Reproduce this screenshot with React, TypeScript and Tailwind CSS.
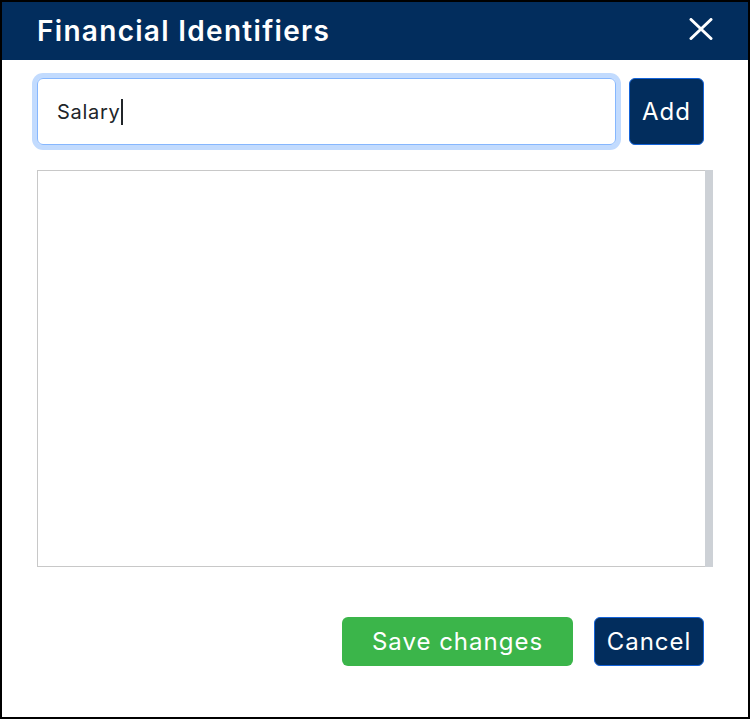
const navy = 'bg-[#022d5d]';

export default function App() {
  return (
    <div className="w-[750px] h-[719px] border-2 border-black bg-white flex flex-col font-['Inter','Liberation_Sans',sans-serif]">
      <div className={`${navy} h-[58px] flex items-center justify-between pl-[35px] pr-[35px]`}>
        <h1 className="text-white text-[28px] font-semibold tracking-[1.3px]">Financial Identifiers</h1>
        <svg width="24" height="22" viewBox="0 0 24 22" className="-mt-[5px]">
          <path d="M2 1.5 L22 20.5 M22 1.5 L2 20.5" stroke="white" strokeWidth="3" strokeLinecap="round" fill="none" />
        </svg>
      </div>

      <div className="flex pl-[35px] mt-[18px]">
        <div className="w-[579px] h-[67px] rounded-[6px] border border-[#86b7fe] ring-[5px] ring-[#c2dbfe] flex items-center pl-[19px]">
          <span className="text-[20px] tracking-[0.7px] text-[#212529]">Salary</span>
          <span className="w-[2px] h-[26px] bg-[#212529] ml-[1px]" />
        </div>
        <button className={`${navy} ml-[13px] w-[75px] h-[67px] rounded-[6px] border border-[#1463d8] text-white text-[24px] tracking-[1px]`}>
          Add
        </button>
      </div>

      <div className="ml-[35px] mt-[25px] w-[676px] h-[397px] border border-[#c8c8c8] flex justify-end">
        <div className="w-[8px] -my-px -mr-px bg-[#cdd1d6]" />
      </div>

      <div className="flex justify-end gap-[21px] pr-[44px] mt-[50px]">
        <button className="w-[231px] h-[49px] rounded-[6px] bg-[#3bb54a] text-white text-[24px] tracking-[1px]">
          Save changes
        </button>
        <button className={`${navy} w-[110px] h-[49px] rounded-[6px] border border-[#1463d8] text-white text-[24px] tracking-[1px]`}>
          Cancel
        </button>
      </div>
    </div>
  );
}
